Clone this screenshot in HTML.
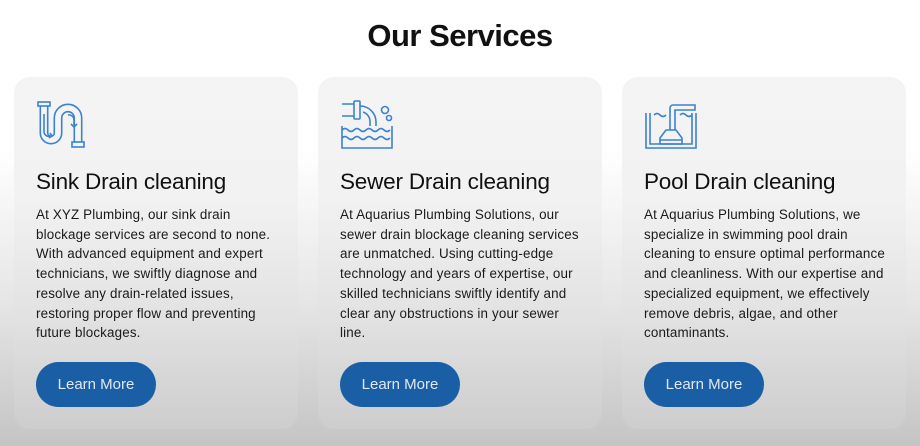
<!DOCTYPE html>
<html><head><meta charset="utf-8"><style>
*{margin:0;padding:0;box-sizing:border-box}
html,body{width:920px;height:446px;overflow:hidden}
body{background:linear-gradient(#fff 0,#fff 150px,#e6e6e6 300px,#c4c4c4 446px);font-family:"Liberation Sans",sans-serif;position:relative}
h1{position:absolute;top:18px;left:0;width:920px;text-align:center;font-size:31px;font-weight:bold;color:#111;letter-spacing:-0.5px}
.card{position:absolute;top:77px;width:284px;height:352px;border-radius:16px;background:linear-gradient(#f4f4f4 0,#f2f2f2 120px,#e2e2e2 240px,#cdcdcd 352px)}
.card svg{position:absolute;left:22px;top:23px}
.card h2{position:absolute;left:22px;top:92px;font-size:22.5px;font-weight:normal;color:#111;letter-spacing:-0.2px;white-space:nowrap}
.card p{position:absolute;left:22px;top:128px;white-space:nowrap;font-size:13.4px;letter-spacing:0.15px;line-height:19.7px;color:#1a1a1a}
.btn{position:absolute;left:22px;top:285px;width:120px;height:45px;border-radius:23px;background:#1a5ea6;color:#e2e8f0;font-size:15px;line-height:45px;text-align:center}
</style></head><body>
<h1>Our Services</h1>
<div class="card" style="left:14px">
<svg width="52" height="50" viewBox="0 0 52 50" fill="none" stroke="#3b82d0" stroke-width="1.6">
<path d="M8 6V33A7 7 0 0 0 22 33V18A10 10 0 0 1 42 18V42" stroke-width="9"/>
<path d="M8 6V33A7 7 0 0 0 22 33V18A10 10 0 0 1 42 18V42" stroke="#f4f4f4" stroke-width="5.8"/>
<rect x="2" y="2" width="12" height="4" fill="#f4f4f4"/>
<rect x="36" y="42" width="12" height="5" fill="#f4f4f4"/>
<path d="M8 14V32a5 5 0 0 0 7 4M13 38l3-2-2-3M32 15a5 5 0 0 1 6 5v6M35 24l3 3 3-3"/>
</svg>
<h2>Sink Drain cleaning</h2>
<p>At XYZ Plumbing, our sink drain<br>blockage services are second to none.<br>With advanced equipment and expert<br>technicians, we swiftly diagnose and<br>resolve any drain-related issues,<br>restoring proper flow and preventing<br>future blockages.</p>
<div class="btn">Learn More</div></div>
<div class="card" style="left:318px">
<svg width="56" height="50" viewBox="0 0 56 50" fill="none" stroke="#3b82d0" stroke-width="1.6"><path d="M2 4h12M2 16h12"/><rect x="14" y="1" width="6" height="18" rx="1"/><path d="M20 6a16 16 0 0 1 16 16v4M23 12a10 10 0 0 1 7 10v4"/><circle cx="45" cy="10" r="3.5"/><circle cx="49" cy="18" r="2.5"/><path d="M2 30q3-3 6 0t6 0 6 0 6 0 6 0 6 0 6 0 6 0M2 38q3-3 6 0t6 0 6 0 6 0 6 0 6 0 6 0 6 0"/><path d="M2 26v22h50v-22"/></svg>
<h2>Sewer Drain cleaning</h2>
<p>At Aquarius Plumbing Solutions, our<br>sewer drain blockage cleaning services<br>are unmatched. Using cutting-edge<br>technology and years of expertise, our<br>skilled technicians swiftly identify and<br>clear any obstructions in your sewer<br>line.</p>
<div class="btn">Learn More</div></div>
<div class="card" style="left:622px">
<svg width="56" height="50" viewBox="0 0 56 50" fill="none" stroke="#3b82d0" stroke-width="1.6"><path d="M2 13v35h50v-35M6 13v31h42v-31"/><path d="M26 30v-22a3 3 0 0 1 3-3h22v5h-20v20"/><path d="M10 15q3-3 6 0t6 0M36 15q3-3 6 0t6 0"/><path d="M22 30h10l6 8v6h-22v-6z"/><path d="M16 40h22"/></svg>
<h2>Pool Drain cleaning</h2>
<p>At Aquarius Plumbing Solutions, we<br>specialize in swimming pool drain<br>cleaning to ensure optimal performance<br>and cleanliness. With our expertise and<br>specialized equipment, we effectively<br>remove debris, algae, and other<br>contaminants.</p>
<div class="btn">Learn More</div></div>
</body></html>
